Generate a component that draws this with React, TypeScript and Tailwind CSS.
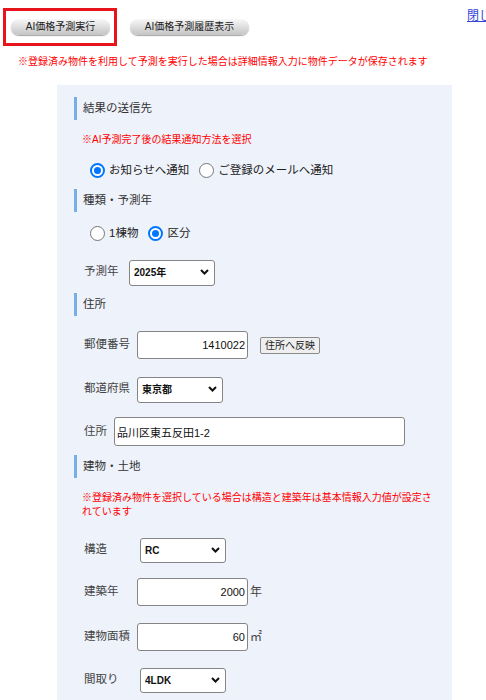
import React from 'react';

const SectionHeader = ({ title, className }: { title: string; className: string }) => (
  <div
    className={`flex h-[23px] items-center border-l-[3px] border-[#76aee5] pl-[6px] text-[11.5px] text-[#333] ${className}`}
  >
    {title}
  </div>
);

const Radio = ({ label, checked }: { label: string; checked?: boolean }) => (
  <label className="flex h-[16px] items-center gap-[4px]">
    {checked ? (
      <span className="flex h-[15px] w-[15px] items-center justify-center rounded-full border-2 border-[#0075ff] bg-white">
        <span className="h-[7px] w-[7px] rounded-full bg-[#0075ff]" />
      </span>
    ) : (
      <span className="h-[15px] w-[15px] rounded-full border border-[#767676] bg-white" />
    )}
    <span className="text-[11.5px] leading-[16px] text-[#222]">{label}</span>
  </label>
);

const Select = ({ value, className }: { value: string; className: string }) => (
  <div className={`relative ${className}`}>
    <select className="h-full w-full appearance-none rounded-[3px] border border-[#858585] bg-white pl-[4px] text-[10px] font-bold text-[#111]">
      <option>{value}</option>
    </select>
    <svg
      className="pointer-events-none absolute right-[6px] top-1/2 -translate-y-1/2"
      width="9"
      height="6"
      viewBox="0 0 9 6"
    >
      <path d="M1 1l3.5 3.5L8 1" stroke="#111" strokeWidth="2" fill="none" />
    </svg>
  </div>
);

const TextInput = ({ value, className }: { value: string; className: string }) => (
  <input
    readOnly
    value={value}
    className={`rounded-[3px] border border-[#858585] bg-white px-[2px] text-[11px] text-[#111] ${className}`}
  />
);

const Label = ({ text, className }: { text: string; className: string }) => (
  <span className={`shrink-0 text-[11.5px] text-[#444] ${className}`}>{text}</span>
);

const App = () => {
  return (
    <div className="min-h-[700px] w-full overflow-hidden bg-white font-['Liberation_Sans','Noto_Sans_CJK_JP',sans-serif]">
      {/* top buttons */}
      <div className="flex items-center pl-[3px] pt-[8px]">
        <div className="flex h-[38px] w-[114px] shrink-0 items-center border-[3px] border-[#e8141c] pl-[5px]">
          <button className="h-[16px] w-[99px] rounded-full bg-linear-to-b from-[#f8f8f8] to-[#c4c4c4] text-[10px] leading-[16px] text-[#222] shadow-[0_1px_1px_rgba(0,0,0,0.35)]">
            AI価格予測実行
          </button>
        </div>
        <button className="ml-[13px] h-[16px] w-[119px] shrink-0 rounded-full bg-linear-to-b from-[#f8f8f8] to-[#c4c4c4] text-[10px] leading-[16px] text-[#222] shadow-[0_1px_1px_rgba(0,0,0,0.35)]">
          AI価格予測履歴表示
        </button>
        <a className="ml-[218px] shrink-0 self-start whitespace-nowrap text-[12px] leading-[16px] text-[#3344dd] underline">
          閉じる
        </a>
      </div>

      <p className="ml-[18px] mt-[9px] whitespace-nowrap text-[10px] leading-[14px] text-[#ff0000]">
        ※登録済み物件を利用して予測を実行した場合は詳細情報入力に物件データが保存されます
      </p>

      {/* form panel */}
      <div className="ml-[57px] mt-[16px] w-[395px] bg-[#eef2fa] pb-[20px] pl-[17px] pr-[15px] pt-[12px]">
        <SectionHeader title="結果の送信先" className="" />
        <p className="ml-[8px] mt-[13px] text-[10px] leading-[14px] text-[#ff0000]">
          ※AI予測完了後の結果通知方法を選択
        </p>
        <div className="ml-[16px] mt-[15px] flex items-center gap-[10px]">
          <Radio label="お知らせへ通知" checked />
          <Radio label="ご登録のメールへ通知" />
        </div>

        <SectionHeader title="種類・予測年" className="mt-[11px]" />
        <div className="ml-[16px] mt-[13px] flex items-center gap-[10px]">
          <Radio label="1棟物" />
          <Radio label="区分" checked />
        </div>
        <div className="ml-[10px] mt-[18px] flex items-center">
          <Label text="予測年" className="w-[45px]" />
          <Select value="2025年" className="h-[26px] w-[86px]" />
        </div>

        <SectionHeader title="住所" className="mt-[8px]" />
        <div className="ml-[10px] mt-[15px] flex items-center">
          <Label text="郵便番号" className="w-[53px]" />
          <TextInput value="1410022" className="h-[28px] w-[111px] text-right" />
          <button className="ml-[12px] h-[17px] rounded-[2px] border border-[#8a8a8a] bg-[#efefef] px-[4px] text-[10px] leading-[15px] text-[#222]">
            住所へ反映
          </button>
        </div>
        <div className="ml-[10px] mt-[17px] flex items-center">
          <Label text="都道府県" className="w-[53px]" />
          <Select value="東京都" className="h-[26px] w-[86px]" />
        </div>
        <div className="ml-[10px] mt-[15px] flex items-center">
          <Label text="住所" className="w-[30px]" />
          <TextInput value="品川区東五反田1-2" className="h-[29px] w-[291px] text-left" />
        </div>

        <SectionHeader title="建物・土地" className="mt-[9px]" />
        <p className="ml-[8px] mt-[13px] max-w-[355px] text-[10px] leading-[14px] text-[#ff0000]">
          ※登録済み物件を選択している場合は構造と建築年は基本情報入力値が設定されています
        </p>
        <div className="ml-[10px] mt-[18px] flex items-center">
          <Label text="構造" className="w-[56px]" />
          <Select value="RC" className="h-[25px] w-[86px]" />
        </div>
        <div className="ml-[10px] mt-[16px] flex items-center">
          <Label text="建築年" className="w-[53px]" />
          <TextInput value="2000" className="h-[28px] w-[111px] text-right" />
          <span className="ml-[2px] text-[12px] text-[#444]">年</span>
        </div>
        <div className="ml-[10px] mt-[17px] flex items-center">
          <Label text="建物面積" className="w-[53px]" />
          <TextInput value="60" className="h-[28px] w-[111px] text-right" />
          <span className="ml-[2px] text-[12px] text-[#444]">㎡</span>
        </div>
        <div className="ml-[10px] mt-[16px] flex items-center">
          <Label text="間取り" className="w-[56px]" />
          <Select value="4LDK" className="h-[25px] w-[86px]" />
        </div>
      </div>
    </div>
  );
};

export default App;
